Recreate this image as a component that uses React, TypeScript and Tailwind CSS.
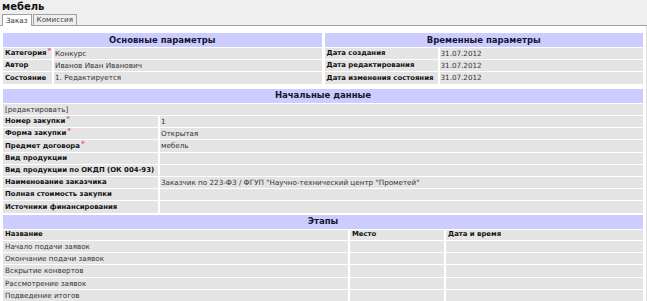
import React from "react";

const Star = () => <span className="text-[#e05a6a] text-[7px] relative -top-[2px] ml-[1px] font-bold">*</span>;

function Header({ children }: { children: React.ReactNode }) {
  return (
    <div className="h-[14px] bg-[#ccccff] flex items-center justify-center font-bold text-[8.5px] text-[#141430]">
      {children}
    </div>
  );
}

function Row({ label, value, req, cols }: { label: string; value?: string; req?: boolean; cols: string }) {
  return (
    <div className={`grid ${cols} gap-x-[2px] h-[11.2px]`}>
      <div className="bg-[#e4e4e4] flex items-center pl-[2px] font-bold text-[6.9px] text-[#111] whitespace-nowrap overflow-hidden">
        {label}
        {req && <Star />}
      </div>
      <div className="bg-[#e4e4e4] flex items-center pl-[1px] text-[#333] whitespace-nowrap overflow-hidden">{value}</div>
    </div>
  );
}

export default function App() {
  return (
    <div className="w-[647px] h-[301px] overflow-hidden bg-[#efefef] font-['DejaVu_Sans',Verdana,sans-serif] text-[7.2px] leading-none">
      <div className="h-[13px] pl-[2px] flex items-center font-bold text-[10px] text-[#111]">мебель</div>
      <div className="flex items-end h-[13px] pl-[2px] gap-[1px] border-b border-[#a0a0a0]">
        <div className="h-[12px] px-[3px] flex items-center bg-white border border-b-0 border-[#a0a0a0] text-[#333] relative top-[1px]">
          Заказ
        </div>
        <div className="h-[11px] px-[3px] flex items-center bg-[#efefef] border border-b-0 border-[#a0a0a0] text-[#444]">
          Комиссия
        </div>
      </div>
      <div className="bg-white h-full pt-[7px] px-[3px] border-r border-[#dcdcdc]">
        <div className="flex gap-[3px]">
          <div className="flex-1 flex flex-col gap-[1px]">
            <Header>Основные параметры</Header>
            <Row cols="grid-cols-[49px_1fr]" label="Категория" req value="Конкурс" />
            <Row cols="grid-cols-[49px_1fr]" label="Автор" value="Иванов Иван Иванович" />
            <Row cols="grid-cols-[49px_1fr]" label="Состояние" value="1. Редактируется" />
          </div>
          <div className="flex-1 flex flex-col gap-[1px]">
            <Header>Временные параметры</Header>
            <Row cols="grid-cols-[113px_1fr]" label="Дата создания" value="31.07.2012" />
            <Row cols="grid-cols-[113px_1fr]" label="Дата редактирования" value="31.07.2012" />
            <Row cols="grid-cols-[113px_1fr]" label="Дата изменения состояния" value="31.07.2012" />
          </div>
        </div>

        <div className="flex flex-col gap-[1px] mt-[5px]">
          <Header>Начальные данные</Header>
          <div className="h-[11.5px] bg-[#e4e4e4] flex items-center pl-[2px] text-[#333]">[редактировать]</div>
          <Row cols="grid-cols-[155px_1fr]" label="Номер закупки" req value="1" />
          <Row cols="grid-cols-[155px_1fr]" label="Форма закупки" req value="Открытая" />
          <Row cols="grid-cols-[155px_1fr]" label="Предмет договора" req value="мебель" />
          <Row cols="grid-cols-[155px_1fr]" label="Вид продукции" />
          <Row cols="grid-cols-[155px_1fr]" label="Вид продукции по ОКДП (ОК 004-93)" />
          <Row
            cols="grid-cols-[155px_1fr]"
            label="Наименование заказчика"
            value={'Заказчик по 223-ФЗ / ФГУП "Научно-технический центр "Прометей"'}
          />
          <Row cols="grid-cols-[155px_1fr]" label="Полная стоимость закупки" />
          <Row cols="grid-cols-[155px_1fr]" label="Источники финансирования" />
        </div>

        <div className="flex flex-col gap-[1px] mt-[2px]">
          <Header>Этапы</Header>
          <div className="grid grid-cols-[345px_94px_1fr] gap-x-[2px] h-[10.5px]">
            <div className="bg-[#e4e4e4] flex items-center pl-[2px] font-bold text-[6.9px] text-[#111]">Название</div>
            <div className="bg-[#e4e4e4] flex items-center pl-[2px] font-bold text-[6.9px] text-[#111]">Место</div>
            <div className="bg-[#e4e4e4] flex items-center pl-[2px] font-bold text-[6.9px] text-[#111]">Дата и время</div>
          </div>
          {["Начало подачи заявок", "Окончание подачи заявок", "Вскрытие конвертов", "Рассмотрение заявок", "Подведение итогов"].map(
            (n) => (
              <div key={n} className="grid grid-cols-[345px_94px_1fr] gap-x-[2px] h-[11.2px]">
                <div className="bg-[#e4e4e4] flex items-center pl-[2px] text-[#333]">{n}</div>
                <div className="bg-[#e4e4e4]" />
                <div className="bg-[#e4e4e4]" />
              </div>
            )
          )}
        </div>
      </div>
    </div>
  );
}
